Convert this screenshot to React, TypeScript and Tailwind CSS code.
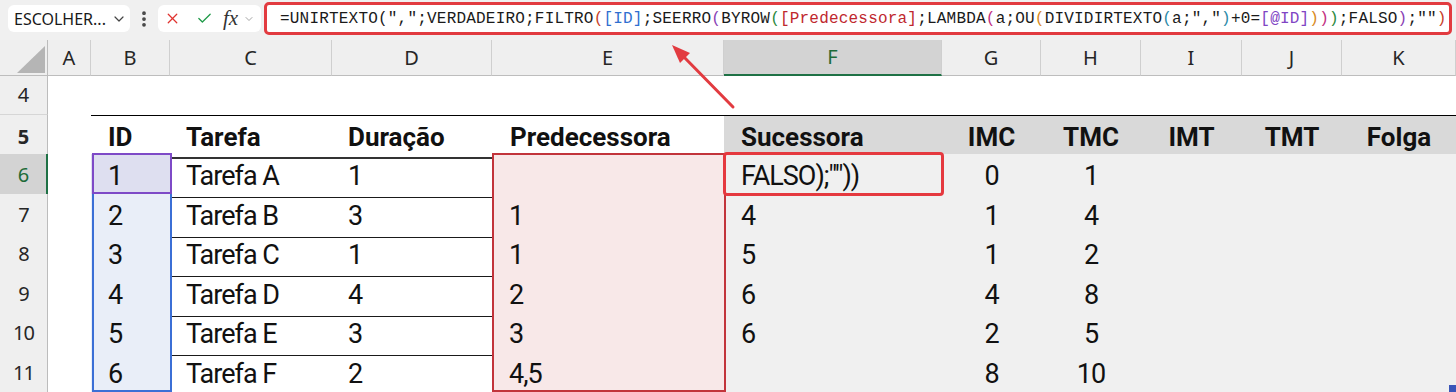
import { Check, ChevronDown, EllipsisVertical, X } from 'lucide-react';

// sheet column template: row header, A..K
const cols = 'grid grid-cols-[48px_43px_79px_162px_160px_232px_218px_99px_100px_101px_100px_1fr]';
const letters = ['A', 'B', 'C', 'D', 'E', 'F', 'G', 'H', 'I', 'J', 'K'];

type Seg = [string, string?];
const formula: Seg[] = [
  ['=UNIRTEXTO(",";VERDADEIRO;FILTRO'],
  ['(', 'text-[#c8402a]'],
  ['[ID]', 'text-[#2f6fd0]'],
  [';SEERRO'],
  ['(', 'text-[#8a3fb5]'],
  ['BYROW'],
  ['(', 'text-[#2b8a3e]'],
  ['[Predecessora]', 'text-[#c0282e]'],
  [';LAMBDA'],
  ['(', 'text-[#c2307f]'],
  ['a;OU'],
  ['(', 'text-[#d98a1c]'],
  ['DIVIDIRTEXTO'],
  ['(', 'text-[#2a8aa8]'],
  ['a;","'],
  [')', 'text-[#2a8aa8]'],
  ['+0='],
  ['[@ID]', 'text-[#8044c4]'],
  [')', 'text-[#d98a1c]'],
  [')', 'text-[#c2307f]'],
  [')', 'text-[#2b8a3e]'],
  [';FALSO'],
  [')', 'text-[#8a3fb5]'],
  [';""'],
  [')', 'text-[#c8402a]'],
];

const tasks = [
  { n: 6, id: '1', t: 'Tarefa A', d: '1', p: '', s: 'FALSO);""))', imc: '0', tmc: '1', h: 'h-[40px]' },
  { n: 7, id: '2', t: 'Tarefa B', d: '3', p: '1', s: '4', imc: '1', tmc: '4', h: 'h-[39px]' },
  { n: 8, id: '3', t: 'Tarefa C', d: '1', p: '1', s: '5', imc: '1', tmc: '2', h: 'h-[40px]' },
  { n: 9, id: '4', t: 'Tarefa D', d: '4', p: '2', s: '6', imc: '4', tmc: '8', h: 'h-[39px]' },
  { n: 10, id: '5', t: 'Tarefa E', d: '3', p: '3', s: '6', imc: '2', tmc: '5', h: 'h-[40px]' },
  { n: 11, id: '6', t: 'Tarefa F', d: '2', p: '4,5', s: '', imc: '8', tmc: '10', h: 'h-[40px]' },
];

function RowHead({ n, active }: { n: number; active?: boolean }) {
  return (
    <div
      className={
        active
          ? 'flex items-center justify-center border-b border-r-2 border-b-[#d6d6d6] border-r-[#1e7145] bg-[#d3d3d3] font-["Noto_Sans"] text-[20px] text-[#1d6b38]'
          : 'flex items-center justify-center border-b border-r border-b-[#d6d6d6] border-r-[#bcbcbc] bg-[#efefef] font-["Noto_Sans"] text-[20px] text-[#262626]'
      }
    >
      {n}
    </div>
  );
}

export default function App() {
  return (
    <div className="relative h-[392px] w-[1456px] overflow-hidden bg-white font-['Roboto',sans-serif] text-[#111]">
      {/* Formula bar */}
      <div className="flex h-[40px] items-center bg-[#f0f0f0] pb-[3px] pl-[8px]">
        <div className="flex h-[27px] w-[122px] items-center justify-between rounded-[6px] bg-white pl-[6px] pr-[3px] font-['Noto_Sans'] text-[16px] text-[#1a1a1a]">
          ESCOLHER...
          <ChevronDown className="h-[16px] w-[16px] text-[#444]" strokeWidth={1.8} />
        </div>
        <div className="flex w-[28px] justify-center">
          <EllipsisVertical className="h-[20px] w-[20px] text-[#444]" strokeWidth={2.5} />
        </div>
        <div className="flex h-[27px] w-[103px] items-center rounded-[6px] bg-white pl-[6px]">
          <X className="h-[17px] w-[17px] text-[#e0332f]" strokeWidth={1.8} />
          <Check className="ml-[15px] h-[17px] w-[17px] text-[#1f9a48]" strokeWidth={1.8} />
          <span className="ml-[10px] font-['Liberation_Serif',serif] text-[21px] italic leading-none text-[#333]">fx</span>
          <ChevronDown className="ml-[5px] h-[12px] w-[12px] text-[#9a9a9a]" strokeWidth={1.8} />
        </div>
        <div className="ml-[3px] mr-[4px] flex h-[33px] flex-1 items-center overflow-hidden whitespace-pre rounded-[5px] border-[3px] border-[#e23b40] bg-white pl-[13px] pt-[1px] font-['Liberation_Mono',monospace] text-[16px] tracking-[0.2px] text-[#1a1a1a]">
          {formula.map(([text, color], i) => (
            <span key={i} className={color}>
              {text}
            </span>
          ))}
        </div>
      </div>

      {/* Column headers */}
      <div className={`${cols} h-[36px] font-['Noto_Sans'] text-[20px] text-[#262626]`}>
        <div className="border-b border-r border-b-[#bdbdbd] border-r-[#bcbcbc] bg-[#efefef]">
          <svg width="47" height="35" viewBox="0 0 47 35">
            <polygon points="45,6 45,33 17,33" fill="#b5b5b5" />
          </svg>
        </div>
        {letters.map((l) =>
          l === 'F' ? (
            <div key={l} className="flex items-center justify-center border-b-2 border-r border-b-[#1e7145] border-r-[#cfcfcf] bg-[#d3d3d3] text-[#1d6b38]">
              {l}
            </div>
          ) : (
            <div key={l} className="flex items-center justify-center border-b border-r border-b-[#bdbdbd] border-r-[#cfcfcf] bg-[#efefef]">
              {l}
            </div>
          )
        )}
      </div>

      {/* Row 4 */}
      <div className={`${cols} h-[39px]`}>
        <RowHead n={4} />
      </div>

      {/* Row 5: table header */}
      <div className={`${cols} h-[39px] text-[26px] font-bold`}>
        <RowHead n={5} />
        <div />
        <div className="flex items-center border-y border-t-black border-b-2 border-b-[#333] pl-[17px] pt-[2px]">ID</div>
        <div className="flex items-center border-y border-t-black border-b-2 border-b-[#333] pl-[16px] pt-[2px]">Tarefa</div>
        <div className="flex items-center border-y border-t-black border-b-2 border-b-[#333] pl-[16px] pt-[2px]">Duração</div>
        <div className="flex items-center border-y border-t-black border-b-2 border-b-[#333] pl-[18px] pt-[2px]">Predecessora</div>
        <div className="flex items-center border-y border-t-black border-b-2 border-b-[#333] bg-[#d9d9d9] pl-[17px] pt-[2px]">Sucessora</div>
        {['IMC', 'TMC', 'IMT', 'TMT', 'Folga'].map((h) => (
          <div key={h} className="flex items-center justify-center border-y border-t-black border-b-2 border-b-[#333] bg-[#d9d9d9] pt-[2px]">
            {h}
          </div>
        ))}
      </div>

      {/* Data rows */}
      {tasks.map((r) => {
        const line = r.n === 11 ? 'border-b border-dotted border-b-[#bdbdbd]' : 'border-b border-b-[#1a1a1a]';
        return (
          <div key={r.n} className={`${cols} ${r.h} text-[27px] tracking-[-1px]`}>
            <RowHead n={r.n} active={r.n === 6} />
            <div />
            <div className={`flex items-center pl-[17px] pt-[2px] ${line} ${r.n === 6 ? 'bg-[#dedff0]' : 'bg-[#e9eef8]'}`}>{r.id}</div>
            <div className={`flex items-center pl-[16px] pt-[2px] ${line}`}>{r.t}</div>
            <div className={`flex items-center pl-[16px] pt-[2px] ${line}`}>{r.d}</div>
            <div className={`flex items-center bg-[#f8e8e8] pl-[17px] pt-[2px] ${line}`}>{r.p}</div>
            <div className={`flex items-center bg-[#f0f0f0] pl-[17px] pt-[2px] ${line}`}>{r.s}</div>
            <div className={`flex items-center justify-center bg-[#f0f0f0] pt-[2px] ${line}`}>{r.imc}</div>
            <div className={`flex items-center justify-center bg-[#f0f0f0] pt-[2px] ${line}`}>{r.tmc}</div>
            <div className={`bg-[#f0f0f0] ${line}`} />
            <div className={`bg-[#f0f0f0] ${line}`} />
            <div className={`bg-[#f0f0f0] ${line}`} />
          </div>
        );
      })}

      {/* Formula reference highlights */}
      <div className="pointer-events-none absolute left-[92px] top-[153px] h-[239px] w-[80px] border-2 border-[#3b6fd6]" />
      <div className="pointer-events-none absolute left-[92px] top-[153px] h-[41px] w-[80px] border-2 border-[#7e4ac7]" />
      <div className="pointer-events-none absolute left-[492px] top-[153px] h-[239px] w-[234px] border-2 border-[#c2343b]" />
      <div className="pointer-events-none absolute left-[1449px] top-[385px] h-[7px] w-[7px] bg-[#3b55b8]" />

      {/* Annotation */}
      <div className="pointer-events-none absolute left-[723px] top-[152px] h-[44px] w-[221px] rounded-[4px] border-[3px] border-[#e5393f]" />
      <svg className="pointer-events-none absolute left-0 top-0" width="1456" height="392">
        <line x1="733" y1="107" x2="682" y2="55" stroke="#e23b40" strokeWidth="3" strokeLinecap="round" />
        <polygon points="672,45 690,53 680,63" fill="#e23b40" />
      </svg>
    </div>
  );
}
